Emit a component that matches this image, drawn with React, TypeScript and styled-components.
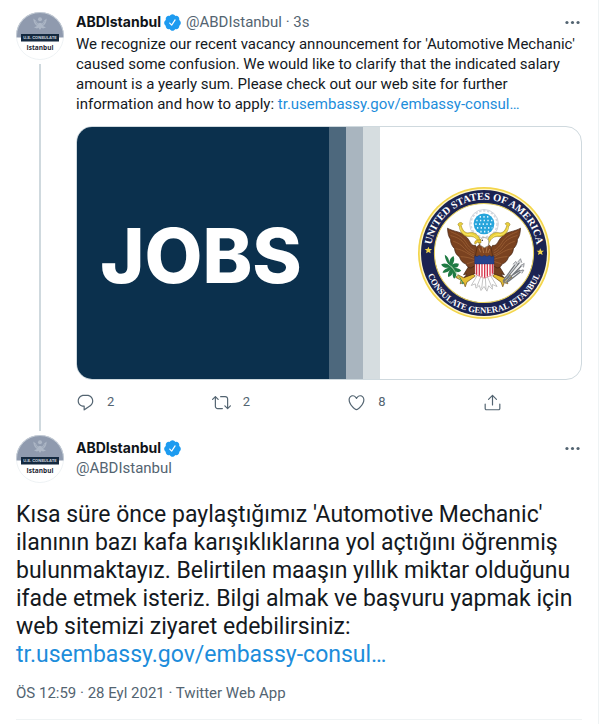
import React from "react";
import styled, { createGlobalStyle } from "styled-components";

const GlobalStyle = createGlobalStyle`
  * { box-sizing: border-box; }
  body {
    margin: 0;
    background: #ffffff;
    color: #14191e;
    font-family: Roboto, "Liberation Sans", sans-serif;
    font-size: 15px;
    line-height: 20px;
  }
`;

const Timeline = styled.main`
  margin-right: 2px;
  padding: 12px 16px 4px;
  border-right: 1px solid #eff3f4;
  background: #ffffff;
`;

const ThreadTweet = styled.article`
  display: grid;
  grid-template-columns: 48px minmax(0, 1fr);
  column-gap: 12px;
`;

const Rail = styled.div`
  display: flex;
  flex-direction: column;
  align-items: center;
  gap: 4px;
`;

const ThreadLine = styled.div`
  flex: 1;
  width: 2px;
  background: #cfd9de;
`;

const ThreadBody = styled.div`
  padding-bottom: 19px;
`;

const Header = styled.header`
  display: flex;
  align-items: flex-start;
  justify-content: space-between;
`;

const Byline = styled.div<{ $stacked?: boolean }>`
  display: flex;
  flex: 1;
  flex-direction: ${(p) => (p.$stacked ? "column" : "row")};
  gap: ${(p) => (p.$stacked ? "0" : "4px")};
`;

const Name = styled.a`
  display: flex;
  align-items: center;
  gap: 2px;
  color: #0f1419;
  font-family: Inter, "Liberation Sans", sans-serif;
  font-size: 14px;
  font-weight: 700;
  text-decoration: none;
`;

const Muted = styled.span`
  color: #536471;
`;

const MoreButton = styled.button`
  display: flex;
  align-items: center;
  height: 20px;
  padding: 0;
  border: 0;
  background: none;
  color: #536471;
  cursor: pointer;
`;

const Icon = styled.svg`
  display: block;
  width: 19px;
  height: 19px;
  flex: none;
  fill: currentColor;
`;

const VerifiedIcon = styled(Icon)`
  color: #1d9bf0;
`;

const Text = styled.p`
  margin: 2px 0 12px;
`;

const LargeText = styled.p`
  margin: 18px 0 14px;
  font-size: 23px;
  line-height: 28px;
`;

const TextLink = styled.a`
  color: #1d8ddb;
  text-decoration: none;
`;

const MediaCard = styled.a`
  display: grid;
  grid-template-columns: 252fr 17fr 17fr 17fr 201fr;
  aspect-ratio: 506 / 254;
  overflow: hidden;
  border: 1px solid #cfd9de;
  border-radius: 16px;
  text-decoration: none;
`;

const JobsPanel = styled.div`
  display: flex;
  align-items: center;
  justify-content: center;
  padding: 6px 4px 0 0;
  background: #0b304d;
  color: #ffffff;
  font-family: Inter, "Liberation Sans", sans-serif;
  font-size: 75px;
  font-weight: 800;
  line-height: 80px;
`;

const Stripe = styled.div<{ $color: string }>`
  background: ${(p) => p.$color};
`;

const SealPanel = styled.div`
  display: flex;
  align-items: center;
  justify-content: center;
  padding-left: 6px;
`;

const SealDrawing = styled.svg`
  width: 134px;
  height: 134px;
`;

const AvatarDrawing = styled.svg`
  display: block;
  width: 48px;
  height: 48px;
  flex: none;
`;

const Actions = styled.div`
  display: grid;
  grid-template-columns: 1fr 1fr 1fr auto;
  max-width: 426px;
  margin-top: 12px;
`;

const ActionButton = styled.button`
  display: flex;
  align-items: center;
  gap: 12px;
  height: 20px;
  padding: 0;
  border: 0;
  background: none;
  color: #536471;
  font: inherit;
  font-size: 13px;
  cursor: pointer;
`;

const FocusHeader = styled(Header)`
  margin-top: 4px;
  gap: 12px;
`;

const FocusByline = styled(Byline)`
  padding-top: 3px;
`;

const FocusMore = styled(MoreButton)`
  margin-top: 3px;
`;

const Meta = styled.div`
  padding-bottom: 16px;
  border-bottom: 1px solid #eff3f4;
  color: #536471;
`;

const Avatar = ({ id }: { id: string }) => (
  <AvatarDrawing viewBox="0 0 48 48" role="img" aria-label="ABDIstanbul">
    <clipPath id={id}>
      <circle cx="24" cy="24" r="24" />
    </clipPath>
    <g clipPath={`url(#${id})`}>
      <rect width="48" height="48" fill="#fff" />
      <rect width="48" height="25.5" fill="#8f9aae" />
      <g fill="#adb7c6">
        <circle cx="24" cy="7.200" r="2" />
        <path d="M17.300 6.500c.2 4.500 2 7 5 8l1.700 1 1.700-1c3-1 4.800-3.500 5-8l-2.700 2.200-1.500 2.300h-5l-1.500-2.300z" />
        <path d="M18 15.500l4-2 2 1 2-1 4 2-3 1-1.500-.7L24 18l-1.500-2.200-1.500.7z" />
      </g>
      <path d="M19 9l2.500 4M29 9l-2.500 4M20.500 8.500l2 3.500M27.500 8.500l-2 3.500" stroke="#8f9aae" strokeWidth=".5" />
      <rect x="5" y="22" width="38" height="7.5" fill="#14293f" />
      <text x="24" y="27.400" textAnchor="middle" fontSize="4" fontWeight="700" fill="#c9d2dc" fontFamily="Inter, sans-serif">U.S. CONSULATE</text>
      <text x="24" y="38" textAnchor="middle" fontSize="6.500" fontWeight="700" fill="#1c2430" fontFamily="Open Sans, sans-serif">Istanbul</text>
    </g>
    <circle cx="24" cy="24" r="23.500" fill="none" stroke="#e3e9ed" strokeWidth=".6" />
  </AvatarDrawing>
);

const Wing = () => (
  <g>
    <path
      d="M113 158c1 16 3 25 9 33 0 12 5 21 12 28 1 11 7 20 15 25 2 10 10 18 19 21 2 7 8 11 15 12l22-14V222l-9-13c-8 2-13-4-17-12-8-15-20-24-35-28-12-3-22-6-31-11z"
      fill="#7a4220"
      stroke="#3d2010"
      strokeWidth="2"
    />
    <path
      d="M122 168c16 8 34 12 46 32 6 11 15 20 25 25M122 180c18 4 34 12 43 27 7 11 16 20 28 25M130 197c15 4 26 12 34 22 8 9 18 15 28 19M137 219c14 2 24 7 34 13l22 12M152 243c13 0 26 3 41 8M171 264c8-2 15-5 23-7"
      fill="none"
      stroke="#a3673a"
      strokeWidth="2"
    />
    <path
      d="M144 148c2-9 11-9 15-3l-5 5c4 14 10 21 20 22 12-4 24 0 32 11l9 18-7 5c-5-15-14-24-27-23-18 2-31-12-33-31z"
      fill="#ead03b"
      stroke="#8f7920"
      strokeWidth="1.5"
    />
    <path d="M150 155c4 15 14 22 24 22 11-1 20 3 27 12" fill="none" stroke="#fff07d" strokeWidth="2" />
  </g>
);

const Seal = () => (
  <SealDrawing viewBox="22 32 400 400" role="img" aria-label="United States of America Consulate General Istanbul">
    <defs>
      <path id="sealTop" d="M63 232a159 159 0 0 1 318 0" />
      <path id="sealBottom" d="M42 232a180 180 0 0 0 360 0" />
    </defs>
    <circle cx="222" cy="232" r="197" fill="#f3d54b" />
    <circle cx="222" cy="232" r="192" fill="#fff6c8" />
    <circle cx="222" cy="232" r="188" fill="#1b2352" />
    <circle cx="222" cy="232" r="148" fill="#fff" stroke="#e6cf5c" strokeWidth="3" />
    <g fill="#fff" fontFamily="Liberation Serif, serif" fontWeight="700" textAnchor="middle">
      <text fontSize="31">
        <textPath href="#sealTop" startOffset="50%">UNITED STATES OF AMERICA</textPath>
      </text>
      <text fontSize="26">
        <textPath href="#sealBottom" startOffset="50%">CONSULATE GENERAL ISTANBUL</textPath>
      </text>
    </g>
    <g fill="#f3d54b">
      <path d="M56 213l3 7h8l-6 5 2 8-7-4-7 4 2-8-6-5h8z" />
      <path d="M390 218l3 7h8l-6 5 2 8-7-4-7 4 2-8-6-5h8z" />
    </g>
    <circle cx="222" cy="145" r="43" fill="#fff" stroke="#b9bfc9" strokeWidth="2" />
    <circle cx="222" cy="145" r="39" fill="none" stroke="#d3d8df" strokeWidth="5" strokeDasharray="7 5" />
    <circle cx="222" cy="145" r="34" fill="#fff" />
    <circle cx="222" cy="145" r="31" fill="#27a5db" />
    <path d="M209 124h30M199 135h50M196 146h55M201 157h46M211 168h27" fill="none" stroke="#dff5ff" strokeWidth="5" strokeDasharray="4 7" />
    <g fill="#fff" stroke="#8b8b8b" strokeWidth="1.5">
      <path d="M207 290l-23 39 12-5 2 13 10-8 5 15 9-12 9 14 5-16 11 10v-14l14 6-25-42z" />
      <path d="M213 302l-12 29M219 305l-4 33M226 305l2 36M232 302l13 31" fill="none" />
    </g>
    <g fill="#e5bd32" stroke="#6d4b17" strokeWidth="2">
      <path d="M184 289l-22 17-18-9-6 8 15 8-2 11 10-4 5 13 5-14 25-18z" />
      <path d="M260 289l22 17 18-9 6 8-15 8 2 11-10-4-5 13-5-14-25-18z" />
    </g>
    <g fill="#1f7b43">
      <path d="M157 325c-5-19-16-39-43-62-6-9-9-17-9-26 9 5 13 13 13 23 1-8 5-15 13-19 4 10 2 17-3 25 6-4 12-5 19-2-1 10-7 13-15 12 9 0 17 2 22 9-7 6-13 5-20 0 12 14 21 25 28 39z" />
      <path d="M120 270c-9-8-17-8-26-4 5 9 14 12 25 9-10 2-18 7-21 15 10 2 19-1 25-10-7 8-10 15-8 24 9-2 14-9 15-19-3 10-2 18 3 24 7-6 8-14 3-24z" />
    </g>
    <path d="M124 270l34 53" fill="none" stroke="#a8cf9b" strokeWidth="2" />
    <g fill="none" stroke="#73777c" strokeWidth="4">
      <path d="M279 320l50-61M284 322l52-54M279 315l38-51M290 320l48-37M285 312l45-29" />
      <path d="M308 266l9-9 5 10M322 260l9-11 4 12M331 270l11-7-2 12M328 285l13-2-6 10" fill="#d7d9dc" strokeWidth="2" />
      <path d="M285 320l47-57M285 310l35-42" stroke="#dadcdf" strokeWidth="1.5" />
    </g>
    <path d="M175 274l21-10v29l-33 12 8-10-10 2zM269 274l-21-10v29l33 12-8-10 10 2z" fill="#71401f" stroke="#3d2010" strokeWidth="2" />
    <Wing />
    <g transform="matrix(-1 0 0 1 444 0)">
      <Wing />
    </g>
    <path d="M196 243l6-31 9-8h22l9 8 6 31z" fill="#80451f" stroke="#3d2010" strokeWidth="1.5" />
    <path d="M207 218l5 12M217 214l4 18M231 214l-3 18M239 220l-5 12" stroke="#c58a55" strokeWidth="2" />
    <path d="M211 209c-4-13 0-23 12-23 9 0 14 7 13 14l-1 10-12 6z" fill="#fff" stroke="#8c8c80" strokeWidth="2" />
    <path d="M213 192l-14 2c-5 3-6 8-4 12l8-6 10 2z" fill="#edc72f" stroke="#8f7920" strokeWidth="1.5" />
    <circle cx="217" cy="194" r="2" fill="#222" />
    <path d="M195 247h56v43c0 8-12 11-28 17-16-6-28-9-28-17z" fill="#fff" stroke="#b7414d" strokeWidth="1.5" />
    <path d="M200 264v33M208 264v36M216 264v39M224 264v42M232 264v38M240 264v35M247 264v30" stroke="#d6354b" strokeWidth="4" />
    <path d="M194 240l7 3 7-4 8 4 7-4 8 4 7-4 7 4 7-3v25h-58z" fill="#26438d" stroke="#172a5c" strokeWidth="1" />
  </SealDrawing>
);

const Verified = () => (
  <VerifiedIcon viewBox="0 0 24 24" role="img" aria-label="Verified account">
    <path d="M22.5 12.5c0-1.58-.875-2.95-2.148-3.6.154-.435.238-.905.238-1.4 0-2.21-1.71-3.998-3.818-3.998-.47 0-.92.084-1.336.25C14.818 2.415 13.51 1.5 12 1.5s-2.816.917-3.437 2.25c-.415-.165-.866-.25-1.336-.25-2.11 0-3.818 1.79-3.818 4 0 .494.083.964.237 1.4-1.272.65-2.147 2.018-2.147 3.6 0 1.495.782 2.798 1.942 3.486-.02.17-.032.34-.032.514 0 2.21 1.708 4 3.818 4 .47 0 .92-.086 1.335-.25.62 1.334 1.926 2.25 3.437 2.25 1.512 0 2.818-.916 3.437-2.25.415.163.865.248 1.336.248 2.11 0 3.818-1.79 3.818-4 0-.174-.012-.344-.033-.513 1.158-.687 1.943-1.99 1.943-3.484zm-6.616-3.334l-4.334 6.5c-.145.217-.382.334-.625.334-.143 0-.288-.04-.416-.126l-.115-.094-2.415-2.415c-.293-.293-.293-.768 0-1.06s.768-.294 1.06 0l1.77 1.767 3.825-5.74c.23-.345.696-.436 1.04-.207.346.23.44.696.21 1.04z" />
  </VerifiedIcon>
);

const Dots = () => (
  <Icon viewBox="0 0 24 24" aria-hidden="true">
    <circle cx="5" cy="12" r="2" />
    <circle cx="12" cy="12" r="2" />
    <circle cx="19" cy="12" r="2" />
  </Icon>
);

const actions = [
  {
    label: "Reply",
    count: 2,
    paths: [
      "M14.046 2.242l-4.148-.01h-.002c-4.374 0-7.8 3.427-7.8 7.802 0 4.098 3.186 7.206 7.465 7.37v3.828c0 .108.044.286.12.403.142.225.384.347.632.347.138 0 .277-.038.402-.118.264-.168 6.473-4.14 8.088-5.506 1.902-1.61 3.04-3.97 3.043-6.312v-.017c-.006-4.367-3.43-7.787-7.8-7.788zm3.787 12.972c-1.134.96-4.862 3.405-6.772 4.643V16.67c0-.414-.335-.75-.75-.75h-.396c-3.66 0-6.318-2.476-6.318-5.886 0-3.534 2.768-6.302 6.3-6.302l4.147.01h.002c3.532 0 6.3 2.766 6.302 6.296-.003 1.91-.942 3.844-2.514 5.176z",
    ],
  },
  {
    label: "Retweet",
    count: 2,
    paths: [
      "M23.77 15.67c-.292-.293-.767-.293-1.06 0l-2.22 2.22V7.65c0-2.068-1.683-3.75-3.75-3.75h-5.85c-.414 0-.75.336-.75.75s.336.75.75.75h5.85c1.24 0 2.25 1.01 2.25 2.25v10.24l-2.22-2.22c-.293-.293-.768-.293-1.06 0s-.294.768 0 1.06l3.5 3.5c.145.147.337.22.53.22s.383-.072.53-.22l3.5-3.5c.294-.292.294-.767 0-1.06zm-10.66 3.28H7.26c-1.24 0-2.25-1.01-2.25-2.25V6.46l2.22 2.22c.148.147.34.22.532.22s.384-.073.53-.22c.293-.293.293-.768 0-1.06l-3.5-3.5c-.293-.294-.768-.294-1.06 0l-3.5 3.5c-.294.292-.294.767 0 1.06s.767.293 1.06 0l2.22-2.22V16.7c0 2.068 1.683 3.75 3.75 3.75h5.85c.414 0 .75-.336.75-.75s-.337-.75-.75-.75z",
    ],
  },
  {
    label: "Like",
    count: 8,
    paths: [
      "M12 21.638h-.014C9.403 21.59 1.95 14.856 1.95 8.478c0-3.064 2.525-5.754 5.403-5.754 2.29 0 3.83 1.58 4.646 2.73.814-1.148 2.354-2.73 4.645-2.73 2.88 0 5.404 2.69 5.404 5.755 0 6.376-7.454 13.11-10.037 13.157H12zM7.354 4.225c-2.08 0-3.903 1.988-3.903 4.255 0 5.74 7.034 11.596 8.55 11.658 1.518-.062 8.55-5.917 8.55-11.658 0-2.267-1.823-4.255-3.903-4.255-2.528 0-3.94 2.936-3.952 2.965-.23.562-1.156.562-1.387 0-.014-.03-1.425-2.965-3.954-2.965z",
    ],
  },
  {
    label: "Share",
    paths: [
      "M17.53 7.47l-5-5c-.293-.293-.768-.293-1.06 0l-5 5c-.294.293-.294.768 0 1.06s.767.294 1.06 0l3.72-3.72V15c0 .414.336.75.75.75s.75-.336.75-.75V4.81l3.72 3.72c.146.147.338.22.53.22s.384-.072.53-.22c.293-.293.293-.767 0-1.06z",
      "M19.708 21.944H4.292C3.028 21.944 2 20.916 2 19.652V14c0-.414.336-.75.75-.75s.75.336.75.75v5.652c0 .437.355.792.792.792h15.416c.437 0 .792-.355.792-.792V14c0-.414.336-.75.75-.75s.75.336.75.75v5.652c0 1.264-1.028 2.292-2.292 2.292z",
    ],
  },
];

export default function App() {
  return (
    <>
      <GlobalStyle />
      <Timeline>
        <ThreadTweet>
          <Rail>
            <Avatar id="avatarThread" />
            <ThreadLine />
          </Rail>
          <ThreadBody>
            <Header>
              <Byline>
                <Name href="#profile">
                  ABDIstanbul
                  <Verified />
                </Name>
                <Muted>@ABDIstanbul · 3s</Muted>
              </Byline>
              <MoreButton aria-label="More">
                <Dots />
              </MoreButton>
            </Header>
            <Text>
              We recognize our recent vacancy announcement for 'Automotive Mechanic' caused some confusion. We would
              like to clarify that the indicated salary amount is a yearly sum. Please check out our web site for
              further information and how to apply: <TextLink href="#embassy">tr.usembassy.gov/embassy-consul…</TextLink>
            </Text>
            <MediaCard href="#jobs">
              <JobsPanel>JOBS</JobsPanel>
              <Stripe $color="#4d687d" />
              <Stripe $color="#a9b5bf" />
              <Stripe $color="#d6dde0" />
              <SealPanel>
                <Seal />
              </SealPanel>
            </MediaCard>
            <Actions>
              {actions.map((action) => (
                <ActionButton key={action.label} aria-label={action.label}>
                  <Icon viewBox="0 0 24 24" aria-hidden="true">
                    {action.paths.map((d) => (
                      <path key={d} d={d} />
                    ))}
                  </Icon>
                  {action.count}
                </ActionButton>
              ))}
            </Actions>
          </ThreadBody>
        </ThreadTweet>

        <article>
          <FocusHeader>
            <Avatar id="avatarFocus" />
            <FocusByline $stacked>
              <Name href="#profile">
                ABDIstanbul
                <Verified />
              </Name>
              <Muted>@ABDIstanbul</Muted>
            </FocusByline>
            <FocusMore aria-label="More">
              <Dots />
            </FocusMore>
          </FocusHeader>
          <LargeText lang="tr">
            Kısa süre önce paylaştığımız 'Automotive Mechanic' ilanının bazı kafa karışıklıklarına yol açtığını
            öğrenmiş bulunmaktayız. Belirtilen maaşın yıllık miktar olduğunu ifade etmek isteriz. Bilgi almak ve
            başvuru yapmak için web sitemizi ziyaret edebilirsiniz:{" "}
            <TextLink href="#embassy">tr.usembassy.gov/embassy-consul…</TextLink>
          </LargeText>
          <Meta>ÖS 12:59 · 28 Eyl 2021 · Twitter Web App</Meta>
        </article>
      </Timeline>
    </>
  );
}
